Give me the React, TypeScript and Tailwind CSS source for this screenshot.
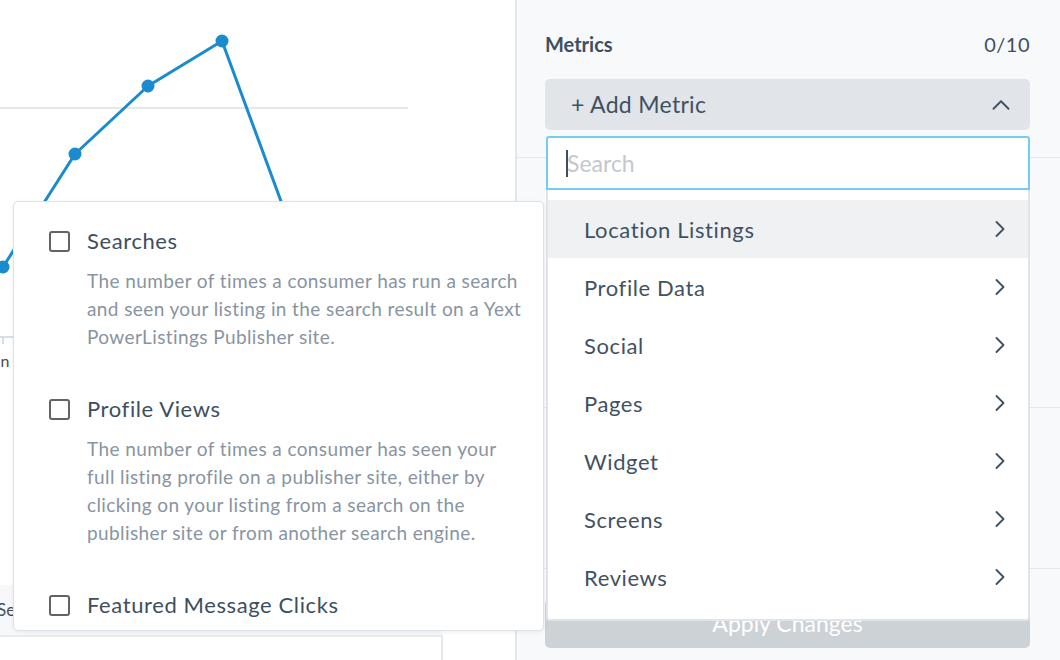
import { ChevronRight, ChevronUp } from "lucide-react"

const categories = [
  "Location Listings",
  "Profile Data",
  "Social",
  "Pages",
  "Widget",
  "Screens",
  "Reviews",
]

const metrics = [
  {
    title: "Searches",
    desc: "The number of times a consumer has run a search and seen your listing in the search result on a Yext PowerListings Publisher site.",
  },
  {
    title: "Profile Views",
    desc: "The number of times a consumer has seen your full listing profile on a publisher site, either by clicking on your listing from a search on the publisher site or from another search engine.",
  },
  { title: "Featured Message Clicks", desc: "" },
]

function Chart() {
  const pts: [number, number][] = [
    [3, 267],
    [75, 154],
    [148, 86],
    [222, 41],
  ]
  return (
    <svg width="515" height="585" className="block">
      <line x1="0" y1="108" x2="408" y2="108" stroke="#e8e8e8" strokeWidth="2" />
      <line x1="0" y1="337" x2="443" y2="337" stroke="#d5dde7" strokeWidth="2" />
      <line x1="3" y1="337" x2="3" y2="344" stroke="#d5dde7" strokeWidth="2" />
      <text x="-15" y="367" fontSize="16" fill="#4a4a4a" fontFamily="Lato, sans-serif">
        Jun 1
      </text>
      <polyline
        points="3,267 75,154 148,86 222,41 310,280"
        fill="none"
        stroke="#1b8bcf"
        strokeWidth="3"
        strokeLinejoin="round"
      />
      {pts.map(([x, y]) => (
        <circle key={x} cx={x} cy={y} r="6.5" fill="#1b8bcf" />
      ))}
    </svg>
  )
}

function MetricPopup() {
  return (
    <div className="absolute left-[13px] top-[201px] w-[531px] h-[430px] bg-white border border-[#dde2e7] rounded-[5px] shadow-[0_1px_4px_rgba(40,50,60,0.08)] overflow-hidden pl-[35px] pt-[25px]">
      {metrics.map((m) => (
        <div key={m.title} className="mb-[44px]">
          <div className="flex items-center gap-[17px] h-[28px]">
            <div className="w-[21px] h-[21px] border-2 border-[#606468] rounded-[3px] shrink-0" />
            <div className="text-[22px] tracking-[0.6px] text-[#3d4f5e] leading-[28px]">{m.title}</div>
          </div>
          {m.desc && (
            <p className="mt-3 ml-[38px] w-[438px] text-[19px] tracking-[0.4px] leading-[28px] text-[#8894a1]">
              {m.desc}
            </p>
          )}
        </div>
      ))}
    </div>
  )
}

function MetricDropdown() {
  return (
    <div className="absolute left-[546px] top-[136px] w-[484px]">
      <div className="h-[54px] bg-white border-2 border-[#74cdef] rounded-t-[3px] flex items-center pl-[18px]">
        <span className="w-[2px] h-[27px] bg-[#3d4f5f]" />
        <span className="text-[23px] text-[#c3c8cd] -ml-[1px]">Search</span>
      </div>
      <div className="bg-white border-x-2 border-b-2 border-[#e1e4e8] rounded-b-[4px] pt-[10px] pb-[13px]">
        {categories.map((c, i) => (
          <div
            key={c}
            className={`h-[58px] flex items-center justify-between pl-[36px] pr-[14px] ${
              i === 0 ? "bg-[#f0f1f3]" : ""
            }`}
          >
            <span className="text-[22px] tracking-[0.6px] text-[#3f5263]">{c}</span>
            <ChevronRight size={28} strokeWidth={1.6} className="text-[#3f5263]" />
          </div>
        ))}
      </div>
    </div>
  )
}

export default function App() {
  return (
    <div className="relative w-[1060px] h-[660px] overflow-hidden flex bg-white font-['Lato',sans-serif]">
      <div className="w-[517px] shrink-0 border-r-2 border-[#e3e6ea] flex flex-col">
        <Chart />
        <div className="h-[52px] bg-[#f7f8fa] border-b-2 border-[#e8ebee] w-[443px] flex items-center">
          <span className="-ml-[3px] text-[17px] text-[#3d4f5e]">Searches</span>
        </div>
        <div className="flex-1 flex">
          <div className="w-[443px] border-r-2 border-[#e3e6ea]" />
        </div>
      </div>

      <div className="flex-1 bg-[#f8f9fb] flex flex-col">
        <div className="pl-[28px] pr-[30px] pt-8">
          <div className="flex items-center justify-between h-6 text-[#3d5061]">
            <span className="text-[20px] font-bold">Metrics</span>
            <span className="text-[20px] tracking-[0.5px]">0/10</span>
          </div>
          <div className="mt-[23px] h-[51px] rounded-[5px] bg-[#e1e4e8] flex items-center justify-between pl-[26px] pr-[14px]">
            <span className="text-[23px] tracking-[0.3px] text-[#3f5263]">+ Add Metric</span>
            <ChevronUp size={30} strokeWidth={1.5} className="text-[#3f5263]" />
          </div>
        </div>
        <div className="mt-[27px] h-[250px] border-t border-[#e3e6ea]" />
        <div className="h-[161px] border-t border-[#e3e6ea]" />
        <div className="border-t border-[#e3e6ea] pl-[28px] pr-[30px] pt-[30px]">
          <div className="h-[49px] rounded-[5px] bg-[#cdd2d7] flex items-center justify-center text-[23px] text-white">
            Apply Changes
          </div>
        </div>
      </div>

      <MetricPopup />
      <MetricDropdown />
    </div>
  )
}
